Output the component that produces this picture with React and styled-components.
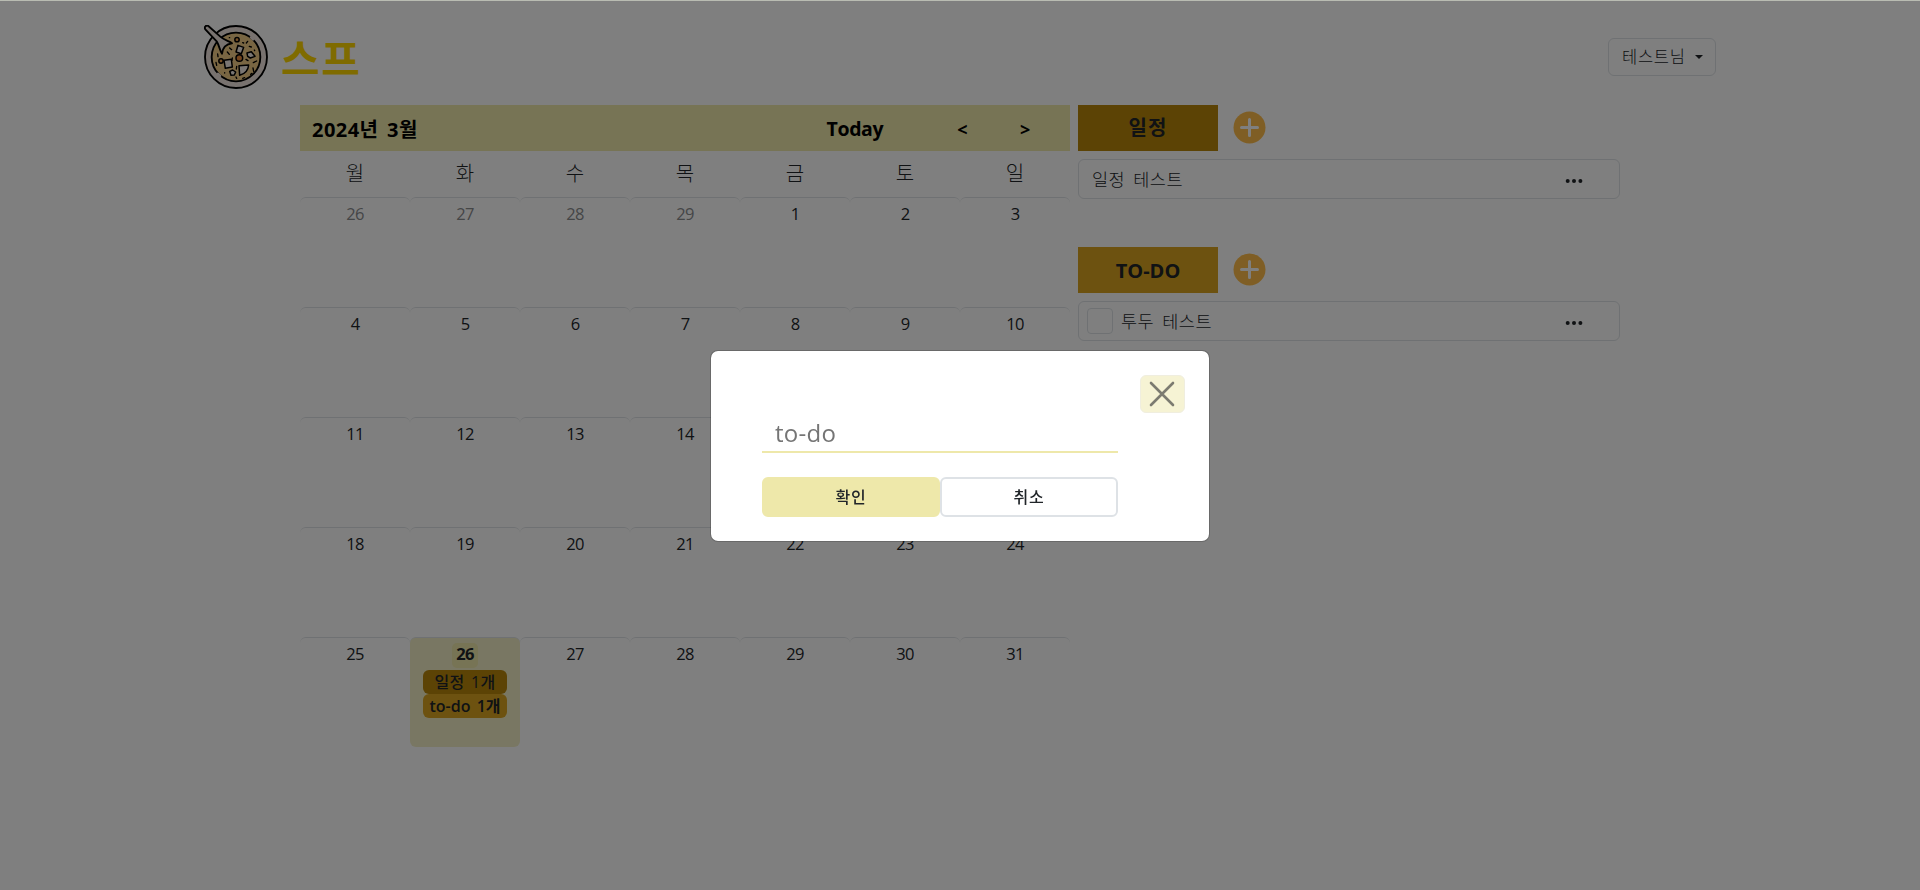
import React from 'react';
import styled, { createGlobalStyle, css } from 'styled-components';

const GlobalStyle = createGlobalStyle`
  *, *::before, *::after { box-sizing: border-box; }
  body {
    margin: 0;
    background: #fff;
    color: #212529;
    font-family: 'Open Sans', 'Noto Sans CJK KR', sans-serif;
    font-size: 16px;
    overflow: hidden;
  }
  button, input { font: inherit; color: inherit; padding: 0; margin: 0; }
`;

const Page = styled.div`
  width: 1520px;
  height: 890px;
  margin: 0 auto;
`;

const Header = styled.header`
  display: flex;
  align-items: center;
  justify-content: space-between;
  height: 105px;
  padding: 9px 4px 0;
`;

const Brand = styled.div`
  display: flex;
  align-items: center;
  gap: 13px;
  height: 64px;
`;

const BrandName = styled.span`
  padding-top: 3px;
  color: #ffd700;
  font-size: 42px;
  font-weight: 700;
  line-height: 61px;
  letter-spacing: 1.5px;
`;

const UserButton = styled.button`
  display: flex;
  align-items: center;
  justify-content: space-between;
  width: 108px;
  height: 38px;
  padding: 0 12px 2px 13px;
  border: 1px solid #dee2e6;
  border-radius: 6px;
  background: transparent;
  font-size: 16.5px;
  font-weight: 300;
  letter-spacing: 0.7px;
`;

const Caret = styled.span`
  margin-top: 2px;
  border-top: 4.8px solid currentColor;
  border-left: 4.8px solid transparent;
  border-right: 4.8px solid transparent;
`;

const Main = styled.main`
  display: flex;
  gap: 8px;
  padding-left: 100px;
`;

const Calendar = styled.section`
  width: 770px;
`;

const CalendarBar = styled.div`
  display: flex;
  align-items: center;
  height: 46px;
  padding: 2px 40px 0 12px;
  background: #eee8aa;
  color: #000;
  font-size: 19.5px;
  font-weight: 700;
`;

const MonthTitle = styled.span`
  flex: 1;
  margin-top: -2px;
  font-size: 20px;
  letter-spacing: 0.45px;
  word-spacing: 3px;
`;

const NavButton = styled.button`
  border: 0;
  background: none;
  margin-left: ${(p) => p.$gap || 0}px;
  font-size: ${(p) => p.$size || 19.5}px;
  letter-spacing: -0.4px;
  line-height: 26px;
`;

const Grid = styled.div`
  display: grid;
  grid-template-columns: repeat(7, 110px);
`;

const Weekday = styled.div`
  height: 46px;
  line-height: 46px;
  text-align: center;
  font-size: 20px;
  font-weight: 300;
`;

const Day = styled.div`
  display: flex;
  flex-direction: column;
  align-items: center;
  height: 110px;
  padding-top: 5px;
  border-top: 1px solid #dee2e6;
  border-radius: 6px;
  color: ${(p) => (p.$muted ? '#8a8c8e' : '#212529')};
  background: ${(p) => (p.$selected ? '#f3efc6' : 'transparent')};
`;

const DayNumber = styled.span`
  height: 25px;
  min-width: 26px;
  margin-bottom: 2px;
  border-radius: 5px;
  text-align: center;
  line-height: 22px;
  font-size: 16.5px;
  letter-spacing: -0.8px;
  ${(p) =>
    p.$selected &&
    css`
      background: #eee8aa;
      font-weight: 700;
    `}
`;

const CountBadge = styled.span`
  width: 84px;
  height: 24px;
  border-radius: 6px;
  background: ${(p) => p.$color};
  font-size: 16px;
  font-weight: ${(p) => p.$weight};
  letter-spacing: ${(p) => p.$tracking || 0}px;
  word-spacing: 2px;
  line-height: 24px;
  text-align: center;
  white-space: nowrap;
`;

const Side = styled.aside`
  display: flex;
  flex-direction: column;
  gap: 48px;
  width: 542px;
`;

const SectionHead = styled.div`
  display: flex;
  align-items: center;
  gap: 15px;
  margin-bottom: 8px;
`;

const SectionTitle = styled.div`
  width: 140px;
  height: 46px;
  background: ${(p) => p.$color};
  font-size: 20px;
  font-weight: 700;
  letter-spacing: ${(p) => p.$tracking || 0}px;
  line-height: ${(p) => p.$line}px;
  text-align: center;
`;

const AddButton = styled.button`
  display: flex;
  border: 0;
  background: none;
  margin-top: -1px;
`;

const Item = styled.div`
  display: flex;
  align-items: center;
  height: 40px;
  padding: 0 35px 0 ${(p) => p.$left}px;
  border: 1px solid #dee2e6;
  border-radius: 6px;
`;

const Checkbox = styled.span`
  width: 26px;
  height: 26px;
  margin-right: 8px;
  border: 1px solid #dee2e6;
  border-radius: 4px;
`;

const ItemText = styled.span`
  flex: 1;
  font-size: 17.5px;
  font-weight: 300;
  letter-spacing: 0.5px;
  word-spacing: 3px;
  line-height: 38px;
`;

const Overlay = styled.div`
  position: fixed;
  inset: 0;
  display: flex;
  align-items: center;
  justify-content: center;
  padding-top: 1px;
  border-top: 1px solid #b9bcb2;
  background: rgba(0, 0, 0, 0.5);
  background-clip: padding-box;
`;

const Dialog = styled.div`
  display: flex;
  flex-direction: column;
  width: 500px;
  height: 192px;
  padding: 24px 24px 0;
  border: 1px solid rgba(0, 0, 0, 0.175);
  border-radius: 8px;
  background: #fff;
  background-clip: padding-box;
`;

const CloseButton = styled.button`
  display: flex;
  align-items: center;
  justify-content: center;
  align-self: flex-end;
  flex-shrink: 0;
  width: 45px;
  height: 38px;
  padding-right: 2px;
  border: 1px solid #f0eedf;
  border-radius: 6px;
  background: #f6f3d4;
`;

const Form = styled.form`
  width: 356px;
  margin-left: 27px;
`;

const TodoInput = styled.input`
  display: block;
  width: 100%;
  height: 40px;
  padding: 1px 13px 0;
  border: 0;
  border-bottom: 2px solid #eee8aa;
  outline: 0;
  background: none;
  font-size: 24px;
  letter-spacing: 0.3px;
  &::placeholder { color: #757575; opacity: 1; }
`;

const Actions = styled.div`
  display: flex;
  margin-top: 24px;
`;

const ActionButton = styled.button`
  flex: 1;
  height: 40px;
  border: 2px solid ${(p) => (p.$primary ? '#eee8aa' : '#dee2e6')};
  border-radius: 6px;
  background: ${(p) => (p.$primary ? '#eee8aa' : '#fff')};
  font-weight: 500;
  letter-spacing: 0.8px;
  line-height: 34px;
`;

const SoupLogo = () => (
  <svg width="64" height="64" viewBox="0 0 192 192" fill="none" stroke="#000" strokeWidth="5.6" strokeLinecap="round" strokeLinejoin="round">
    <circle cx="96" cy="96" r="93" fill="#f0e4df" />
    <circle cx="96" cy="96" r="73" fill="#f3cd86" />
    <path d="M141 37 147 43M42 147 48 152" stroke="#f0e4df" strokeWidth="8" />
    <path d="M49 35 13 3C7-1-1 6 4 13L38 49C46 62 47 76 54 86C56 68 65 57 84 55C75 48 61 46 49 35Z" fill="#f0e4df" />
    <circle cx="99" cy="44" r="6.5" fill="#f0a04d" strokeWidth="4.5" />
    <circle cx="51" cy="108" r="6.5" fill="#f0a04d" strokeWidth="4.5" />
    <circle cx="106" cy="99" r="10" fill="#e88b3b" strokeWidth="4.5" />
    <g fill="#f5ede6" strokeWidth="4.5">
      <path d="M102 61 119 67 112 86 96 81Z" />
      <path d="M60 106 82 103 85 126 64 130Z" />
      <path d="M105 122 134 120Q132 144 107 151Z" />
      <path d="M129 84 142 80 153 94 139 99 131 94Z" />
      <path d="M77 139 86 135 95 141 91 150 81 151Z" />
    </g>
    <path d="M76 38 77 38M116 53 119 54M127 54 131 49M136 64 142 66M151 75 152 77M41 87 42 95M70 81 76 88M77 69 83 74M85 99 84 106M126 103 132 107M148 113 158 108M147 129 149 139M140 148 144 145M62 143 62 144M98 124 97 132M116 160 122 158M36 112 38 121M96 156 98 160" strokeWidth="4" />
  </svg>
);

const PlusCircle = () => (
  <svg width="33" height="33" viewBox="0 0 33 33">
    <circle cx="16.5" cy="16.5" r="16" fill="#ffbd4a" />
    <path d="M16.5 8.5V24.5M8.5 16.5H24.5" stroke="#fff" strokeWidth="3" strokeLinecap="round" />
  </svg>
);

const MoreDots = () => (
  <svg width="20" height="8" viewBox="0 0 20 8" fill="#212529">
    <circle cx="3.7" cy="6" r="2" />
    <circle cx="10" cy="6" r="2" />
    <circle cx="16.4" cy="6" r="2" />
  </svg>
);

const CloseIcon = () => (
  <svg width="26" height="26" viewBox="0 0 26 26" stroke="#7c7b70" strokeWidth="2.6" strokeLinecap="round">
    <path d="M2 2 24 24M24 2 2 24" />
  </svg>
);

const weekdays = ['월', '화', '수', '목', '금', '토', '일'];
const days = [26, 27, 28, 29, ...Array.from({ length: 31 }, (_, i) => i + 1)];

export default function App() {
  return (
    <>
      <GlobalStyle />
      <Page>
        <Header>
          <Brand>
            <SoupLogo />
            <BrandName>스프</BrandName>
          </Brand>
          <UserButton>
            테스트님
            <Caret />
          </UserButton>
        </Header>
        <Main>
          <Calendar>
            <CalendarBar>
              <MonthTitle>2024년 3월</MonthTitle>
              <NavButton>Today</NavButton>
              <NavButton $gap={74} $size={18}>&lt;</NavButton>
              <NavButton $gap={53} $size={18}>&gt;</NavButton>
            </CalendarBar>
            <Grid>
              {weekdays.map((name) => (
                <Weekday key={name}>{name}</Weekday>
              ))}
              {days.map((day, i) => {
                const selected = i === 29;
                return (
                  <Day key={i} $muted={i < 4} $selected={selected}>
                    <DayNumber $selected={selected}>{day}</DayNumber>
                    {selected && (
                      <>
                        <CountBadge $color="#b8860b" $weight={500} $tracking={0.3}>일정 1개</CountBadge>
                        <CountBadge $color="#daa520" $weight={600}>to-do 1개</CountBadge>
                      </>
                    )}
                  </Day>
                );
              })}
            </Grid>
          </Calendar>
          <Side>
            <section>
              <SectionHead>
                <SectionTitle $color="#b8860b" $line={45} $tracking={1}>일정</SectionTitle>
                <AddButton><PlusCircle /></AddButton>
              </SectionHead>
              <Item $left={13}>
                <ItemText>일정 테스트</ItemText>
                <MoreDots />
              </Item>
            </section>
            <section>
              <SectionHead>
                <SectionTitle $color="#daa520" $line={47}>TO-DO</SectionTitle>
                <AddButton><PlusCircle /></AddButton>
              </SectionHead>
              <Item $left={8}>
                <Checkbox />
                <ItemText>투두 테스트</ItemText>
                <MoreDots />
              </Item>
            </section>
          </Side>
        </Main>
      </Page>
      <Overlay>
        <Dialog>
          <CloseButton><CloseIcon /></CloseButton>
          <Form>
            <TodoInput placeholder="to-do" />
            <Actions>
              <ActionButton type="button" $primary>확인</ActionButton>
              <ActionButton type="button">취소</ActionButton>
            </Actions>
          </Form>
        </Dialog>
      </Overlay>
    </>
  );
}
